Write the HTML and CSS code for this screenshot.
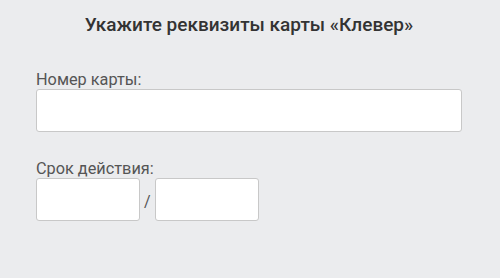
FILE: index.html
```html
<!DOCTYPE html>
<html lang="ru">
<head>
    <meta charset="UTF-8">
    <title>Реквизиты карты</title>
    <link rel="stylesheet" href="styles.css">
</head>
<body>
    <div class="card-form">
        <h1 class="title">Укажите реквизиты карты «Клевер»</h1>

        <div class="field">
            <label class="label" for="cardNumber">Номер карты:</label>
            <input class="input input-wide" id="cardNumber" type="text">
        </div>

        <div class="field">
            <label class="label" for="expMonth">Срок действия:</label>
            <div class="expiry">
                <input class="input input-short" id="expMonth" type="text">
                <span class="slash">/</span>
                <input class="input input-short" id="expYear" type="text">
            </div>
        </div>
    </div>
</body>
</html>
```

FILE: styles.css
```css
* {
    margin: 0;
    padding: 0;
    box-sizing: border-box;
}

body {
    font-family: Roboto, "Liberation Sans", sans-serif;
    background: #ebecee;
    color: #333;
    width: 500px;
    height: 278px;
}

.card-form {
    padding: 14px 38px 0 36px;
}

.title {
    font-size: 19px;
    font-weight: 500;
    color: #333;
    text-align: center;
    line-height: 22px;
    margin-bottom: 35px;
}

.field {
    display: flex;
    flex-direction: column;
    margin-bottom: 28px;
}

.label {
    font-size: 16.3px;
    color: #555;
    line-height: 18px;
}

.input {
    height: 43px;
    background: #fff;
    border: 1px solid #c8c8c8;
    border-radius: 3px;
    font: inherit;
}

.input-wide {
    width: 426px;
}

.expiry {
    display: flex;
    align-items: center;
    gap: 4px;
}

.input-short {
    width: 104px;
}

.slash {
    font-size: 16px;
    color: #555;
    padding-top: 4px;
}
```
